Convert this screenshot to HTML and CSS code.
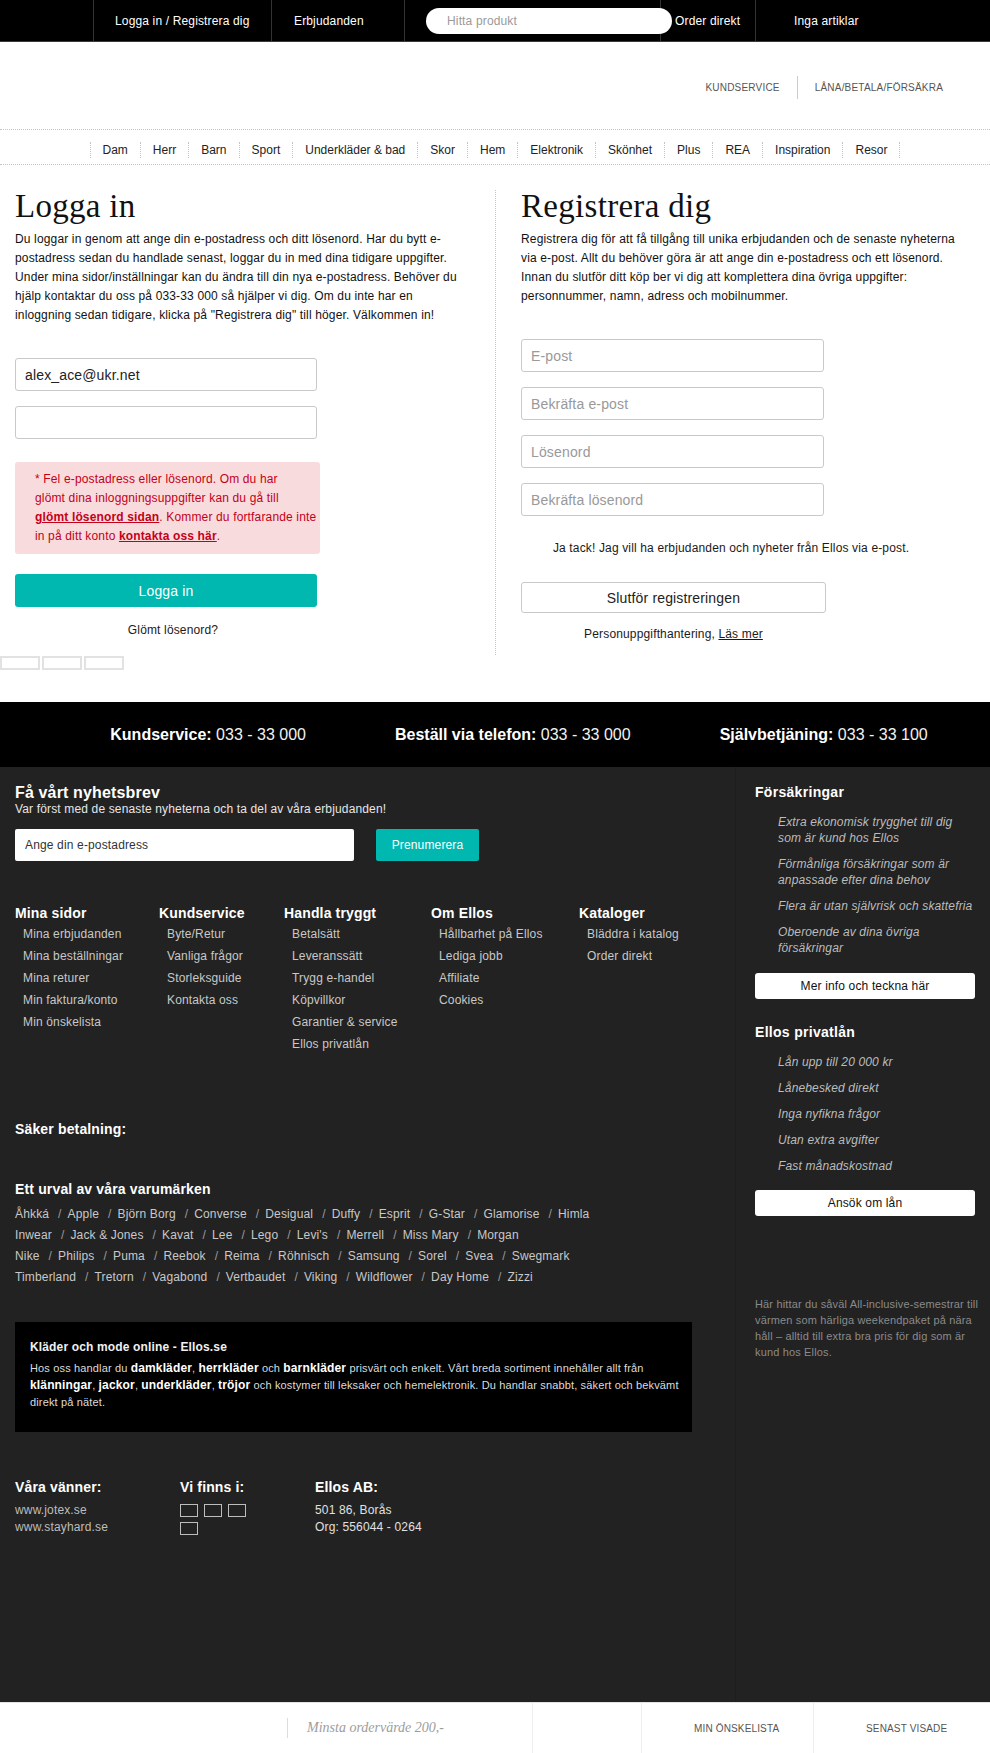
FILE: index.html
```html
<!DOCTYPE html>
<html lang="sv">
<head>
<meta charset="utf-8">
<title>Logga in – Ellos</title>
<link rel="stylesheet" href="styles.css">
</head>
<body>
<div class="topbar">
  <div class="tb-cell tb-first"></div>
  <a class="tb-cell tb-login" href="#">Logga in / Registrera dig</a>
  <a class="tb-cell tb-offers" href="#">Erbjudanden</a>
  <div class="tb-cell tb-search"><input class="search" type="text" placeholder="Hitta produkt"></div>
  <a class="tb-cell tb-order" href="#">Order direkt</a>
  <a class="tb-cell tb-cart" href="#">Inga artiklar</a>
</div>

<header class="header">
  <a class="service-link" href="#">Kundservice</a>
  <a class="service-link" href="#">Låna/Betala/Försäkra</a>
</header>

<nav class="mainnav">
  <ul>
    <li>Dam</li><li>Herr</li><li>Barn</li><li>Sport</li><li>Underkläder &amp; bad</li><li>Skor</li><li>Hem</li><li>Elektronik</li><li>Skönhet</li><li>Plus</li><li>REA</li><li>Inspiration</li><li>Resor</li>
  </ul>
</nav>

<main class="account">
  <section class="col-login">
    <h1 class="page-title">Logga in</h1>
    <p class="intro">Du loggar in genom att ange din e-postadress och ditt lösenord. Har du bytt e-<br>postadress sedan du handlade senast, loggar du in med dina tidigare uppgifter.<br>Under mina sidor/inställningar kan du ändra till din nya e-postadress. Behöver du<br>hjälp kontaktar du oss på 033-33 000 så hjälper vi dig. Om du inte har en<br>inloggning sedan tidigare, klicka på "Registrera dig" till höger. Välkommen in!</p>
    <input class="field" type="text" value="alex_ace@ukr.net">
    <input class="field" type="password">
    <div class="error">* Fel e-postadress eller lösenord. Om du har<br>glömt dina inloggningsuppgifter kan du gå till<br><a href="#">glömt lösenord sidan</a>. Kommer du fortfarande inte<br>in på ditt konto <a href="#">kontakta oss här</a>.</div>
    <button class="btn-primary" type="button">Logga in</button>
    <p class="forgot">Glömt lösenord?</p>
    <div class="social"><span></span><span></span><span></span></div>
  </section>

  <section class="col-register">
    <h1 class="page-title">Registrera dig</h1>
    <p class="intro">Registrera dig för att få tillgång till unika erbjudanden och de senaste nyheterna<br>via e-post. Allt du behöver göra är att ange din e-postadress och ett lösenord.<br>Innan du slutför ditt köp ber vi dig att komplettera dina övriga uppgifter:<br>personnummer, namn, adress och mobilnummer.</p>
    <input class="field field-wide" type="text" placeholder="E-post">
    <input class="field field-wide" type="text" placeholder="Bekräfta e-post">
    <input class="field field-wide" type="text" placeholder="Lösenord">
    <input class="field field-wide" type="text" placeholder="Bekräfta lösenord">
    <p class="optin">Ja tack! Jag vill ha erbjudanden och nyheter från Ellos via e-post.</p>
    <button class="btn-secondary" type="button">Slutför registreringen</button>
    <p class="reg-note">Personuppgifthantering, <a href="#">Läs mer</a></p>
  </section>
</main>

<div class="contactband">
  <span><strong>Kundservice:</strong> 033 - 33 000</span>
  <span><strong>Beställ via telefon:</strong> 033 - 33 000</span>
  <span><strong>Självbetjäning:</strong> 033 - 33 100</span>
</div>

<footer class="footer">
  <div class="footer-main">
    <h2 class="nl-title">Få vårt nyhetsbrev</h2>
    <p class="nl-sub">Var först med de senaste nyheterna och ta del av våra erbjudanden!</p>
    <div class="nl-form">
      <input class="nl-input" type="text" placeholder="Ange din e-postadress">
      <button class="nl-btn" type="button">Prenumerera</button>
    </div>

    <div class="link-cols">
      <div>
        <h4 class="f-head">Mina sidor</h4>
        <ul class="f-list"><li>Mina erbjudanden</li><li>Mina beställningar</li><li>Mina returer</li><li>Min faktura/konto</li><li>Min önskelista</li></ul>
      </div>
      <div>
        <h4 class="f-head">Kundservice</h4>
        <ul class="f-list"><li>Byte/Retur</li><li>Vanliga frågor</li><li>Storleksguide</li><li>Kontakta oss</li></ul>
      </div>
      <div>
        <h4 class="f-head">Handla tryggt</h4>
        <ul class="f-list"><li>Betalsätt</li><li>Leveranssätt</li><li>Trygg e-handel</li><li>Köpvillkor</li><li>Garantier &amp; service</li><li>Ellos privatlån</li></ul>
      </div>
      <div>
        <h4 class="f-head">Om Ellos</h4>
        <ul class="f-list"><li>Hållbarhet på Ellos</li><li>Lediga jobb</li><li>Affiliate</li><li>Cookies</li></ul>
      </div>
      <div>
        <h4 class="f-head">Kataloger</h4>
        <ul class="f-list"><li>Bläddra i katalog</li><li>Order direkt</li></ul>
      </div>
    </div>

    <h4 class="f-head pay-title">Säker betalning:</h4>

    <div class="brands">
      <h4 class="f-head">Ett urval av våra varumärken</h4>
      <div class="brand-lines">
        <div class="brand-line">Åhkká<span class="sep">/</span>Apple<span class="sep">/</span>Björn Borg<span class="sep">/</span>Converse<span class="sep">/</span>Desigual<span class="sep">/</span>Duffy<span class="sep">/</span>Esprit<span class="sep">/</span>G-Star<span class="sep">/</span>Glamorise<span class="sep">/</span>Himla</div>
        <div class="brand-line">Inwear<span class="sep">/</span>Jack &amp; Jones<span class="sep">/</span>Kavat<span class="sep">/</span>Lee<span class="sep">/</span>Lego<span class="sep">/</span>Levi's<span class="sep">/</span>Merrell<span class="sep">/</span>Miss Mary<span class="sep">/</span>Morgan</div>
        <div class="brand-line">Nike<span class="sep">/</span>Philips<span class="sep">/</span>Puma<span class="sep">/</span>Reebok<span class="sep">/</span>Reima<span class="sep">/</span>Röhnisch<span class="sep">/</span>Samsung<span class="sep">/</span>Sorel<span class="sep">/</span>Svea<span class="sep">/</span>Swegmark</div>
        <div class="brand-line">Timberland<span class="sep">/</span>Tretorn<span class="sep">/</span>Vagabond<span class="sep">/</span>Vertbaudet<span class="sep">/</span>Viking<span class="sep">/</span>Wildflower<span class="sep">/</span>Day Home<span class="sep">/</span>Zizzi</div>
      </div>
    </div>

    <div class="seo">
      <h5 class="seo-title">Kläder och mode online - Ellos.se</h5>
      <p class="seo-text">Hos oss handlar du <strong>damkläder</strong>, <strong>herrkläder</strong> och <strong>barnkläder</strong> prisvärt och enkelt. Vårt breda sortiment innehåller allt från<br><strong>klänningar</strong>, <strong>jackor</strong>, <strong>underkläder</strong>, <strong>tröjor</strong> och kostymer till leksaker och hemelektronik. Du handlar snabbt, säkert och bekvämt<br>direkt på nätet.</p>
    </div>

    <div class="friends">
      <div>
        <h4 class="f-head">Våra vänner:</h4>
        <div class="friends-body"><div>www.jotex.se</div><div>www.stayhard.se</div></div>
      </div>
      <div>
        <h4 class="f-head">Vi finns i:</h4>
        <div class="friends-body social-icons"><span></span><span></span><span></span><span></span></div>
      </div>
      <div>
        <h4 class="f-head">Ellos AB:</h4>
        <div class="friends-body address"><div>501 86, Borås</div><div>Org: 556044 - 0264</div></div>
      </div>
    </div>
  </div>

  <aside class="footer-aside">
    <h3 class="aside-title">Försäkringar</h3>
    <ul class="aside-list">
      <li>Extra ekonomisk trygghet till dig<br>som är kund hos Ellos</li>
      <li>Förmånliga försäkringar som är<br>anpassade efter dina behov</li>
      <li>Flera är utan självrisk och skattefria</li>
      <li>Oberoende av dina övriga<br>försäkringar</li>
    </ul>
    <button class="aside-btn" type="button">Mer info och teckna här</button>

    <h3 class="aside-title aside-title-2">Ellos privatlån</h3>
    <ul class="aside-list">
      <li>Lån upp till 20 000 kr</li>
      <li>Lånebesked direkt</li>
      <li>Inga nyfikna frågor</li>
      <li>Utan extra avgifter</li>
      <li>Fast månadskostnad</li>
    </ul>
    <button class="aside-btn aside-btn-2" type="button">Ansök om lån</button>

    <p class="travel">Här hittar du såväl All-inclusive-semestrar till<br>värmen som härliga weekendpaket på nära<br>håll – alltid till extra bra pris för dig som är<br>kund hos Ellos.</p>
  </aside>
</footer>

<div class="bottombar">
  <div class="bb-cell bb-blank"></div>
  <div class="bb-cell bb-min"><span class="bb-min-text">Minsta ordervärde 200,-</span></div>
  <div class="bb-cell bb-gap"></div>
  <a class="bb-cell bb-link" href="#">Min önskelista</a>
  <a class="bb-cell bb-link bb-last" href="#">Senast visade</a>
</div>
</body>
</html>
```

FILE: styles.css
```css
* { box-sizing: border-box; }

body {
  margin: 0;
  font-family: "Liberation Sans", Arial, Helvetica, sans-serif;
  letter-spacing: 0.15px;
  color: #1a1a1a;
  background: #fff;
}

a { color: inherit; text-decoration: none; }
ul { list-style: none; margin: 0; padding: 0; }
button { cursor: pointer; letter-spacing: 0.15px; }
input { letter-spacing: 0.15px; }

/* ---------- top bar ---------- */
.topbar {
  display: flex;
  height: 42px;
  background: #000;
  border-bottom: 1px solid #3a3a3a;
  color: #fff;
  font-size: 12px;
}
.tb-cell {
  display: flex;
  flex: none;
  align-items: center;
  height: 41px;
  border-right: 1px solid #333;
  white-space: nowrap;
}
.tb-first { width: 94px; }
.tb-login { width: 178px; padding-left: 21px; }
.tb-offers { width: 133px; padding-left: 22px; }
.tb-search { width: 256px; padding-left: 21px; }
.tb-order { width: 95px; padding-left: 14px; }
.tb-cart { flex: 1; padding-left: 38px; border-right: 0; }

.search {
  position: relative;
  z-index: 1;
  flex: none;
  width: 246px;
  height: 26px;
  border: 0;
  border-radius: 13px;
  padding: 0 21px;
  background: #fff;
  font: 12px "Liberation Sans", Arial, sans-serif;
  outline: none;
}
.search::placeholder { color: #9a9a9a; }

/* ---------- header ---------- */
.header {
  height: 87px;
  display: flex;
  justify-content: flex-end;
  align-items: center;
  padding: 4px 47px 0 0;
}
.service-link {
  font-size: 10px;
  line-height: 23px;
  color: #555;
  text-transform: uppercase;
  letter-spacing: 0.2px;
  padding: 0 17px;
}
.service-link + .service-link {
  border-left: 1px solid #ccc;
  padding-right: 0;
}

/* ---------- main nav ---------- */
.mainnav {
  border-top: 1px dotted #c4c4c4;
  border-bottom: 1px dotted #c4c4c4;
  padding: 12px 0 6px;
}
.mainnav ul {
  display: flex;
  justify-content: center;
}
.mainnav li {
  border-left: 1px dotted #c4c4c4;
  padding: 0 12px;
  font-size: 12px;
  line-height: 16px;
  letter-spacing: 0;
  color: #222;
  white-space: nowrap;
}
.mainnav li:last-child { border-right: 1px dotted #c4c4c4; }

/* ---------- account ---------- */
.account {
  display: flex;
  align-items: flex-start;
  padding-bottom: 32px;
}
.col-login {
  flex: none;
  width: 495px;
  margin-top: 25px;
  padding: 0 15px;
}
.col-register {
  flex: 1;
  margin-top: 25px;
  border-left: 1px dotted #c4c4c4;
  padding: 0 20px 11px 25px;
}
.page-title {
  margin: 0 0 8px;
  font: normal 33px/32px "Liberation Serif", Georgia, serif;
  letter-spacing: 0.3px;
  color: #111;
}
.intro {
  margin: 0 0 33px;
  font-size: 12px;
  line-height: 19px;
  white-space: nowrap;
  color: #111;
}
.field {
  display: block;
  width: 302px;
  height: 33px;
  margin: 0 0 15px;
  padding: 0 9px;
  border: 1px solid #c9c9c9;
  border-radius: 3px;
  font: 14px "Liberation Sans", Arial, sans-serif;
  color: #222;
  background: #fff;
}
.field-wide { width: 303px; }
.field::placeholder { color: #999; }

.error {
  width: 305px;
  margin-top: 23px;
  padding: 8px 10px 8px 20px;
  background: #f8dcdd;
  border-radius: 3px;
  color: #c4001a;
  font-size: 12px;
  line-height: 19px;
  white-space: nowrap;
}
.error a { font-weight: bold; text-decoration: underline; }

.btn-primary {
  display: block;
  width: 302px;
  height: 33px;
  margin-top: 20px;
  border: 0;
  border-radius: 3px;
  background: #00b8b0;
  color: #fff;
  font: 14px "Liberation Sans", Arial, sans-serif;
}
.forgot {
  width: 316px;
  margin: 14px 0 0;
  text-align: center;
  font-size: 12px;
  line-height: 19px;
}
.social {
  display: flex;
  gap: 2px;
  margin: 16px 0 0 -15px;
}
.social span {
  width: 40px;
  height: 14px;
  border: 2px solid #e2e2e2;
}

.optin {
  width: 420px;
  margin: 23px 0 0;
  text-align: center;
  font-size: 12px;
  line-height: 19px;
}
.btn-secondary {
  display: block;
  width: 305px;
  height: 31px;
  margin-top: 24px;
  border: 1px solid #c9c9c9;
  border-radius: 3px;
  background: #fff;
  color: #222;
  font: 14px "Liberation Sans", Arial, sans-serif;
}
.reg-note {
  width: 305px;
  margin: 12px 0 0;
  text-align: center;
  font-size: 12px;
  line-height: 19px;
}
.reg-note a { text-decoration: underline; }

/* ---------- contact band ---------- */
.contactband {
  display: flex;
  justify-content: center;
  align-items: center;
  gap: 89px;
  height: 65px;
  padding-left: 48px;
  background: #000;
  color: #f2f2f2;
  font-size: 16px;
  letter-spacing: 0;
  white-space: nowrap;
}
.contactband strong { color: #fff; }

/* ---------- footer ---------- */
.footer {
  display: flex;
  min-height: 935px;
  background: #222;
  color: #fff;
}
.footer-main {
  flex: none;
  width: 735px;
  padding: 17px 0 0 15px;
}
.footer-aside {
  flex: 1;
  min-width: 0;
  border-left: 1px solid #1e1e1e;
  padding: 15px 15px 0 19px;
}

.nl-title {
  margin: 0;
  font-size: 16px;
  line-height: 18px;
  font-weight: bold;
}
.nl-sub {
  margin: 0;
  font-size: 12px;
  line-height: 14px;
  color: #e6e6e6;
}
.nl-form {
  display: flex;
  margin-top: 13px;
}
.nl-input {
  width: 339px;
  height: 32px;
  border: 0;
  border-radius: 2px;
  padding: 0 10px;
  font: 12px "Liberation Sans", Arial, sans-serif;
}
.nl-input::placeholder { color: #333; }
.nl-btn {
  width: 103px;
  height: 32px;
  margin-left: 22px;
  border: 0;
  border-radius: 2px;
  background: #00b8b0;
  color: #fff;
  font: 12px "Liberation Sans", Arial, sans-serif;
}

.f-head {
  margin: 0;
  font-size: 14px;
  line-height: 20px;
  font-weight: bold;
  color: #fff;
}
.link-cols {
  display: grid;
  grid-template-columns: 144px 125px 147px 148px auto;
  margin-top: 42px;
}
.f-list { padding-left: 8px; }
.f-list li {
  font-size: 12px;
  line-height: 22px;
  color: #c8c8c8;
  white-space: nowrap;
}

.pay-title { margin-top: 64px; }

.brands { margin-top: 40px; }
.brand-lines { margin-top: 5px; }
.brand-line {
  font-size: 12px;
  line-height: 21px;
  color: #c8c8c8;
  white-space: nowrap;
}
.sep {
  margin: 0 6px 0 9px;
  color: #9a9a9a;
}

.seo {
  width: 677px;
  margin-top: 34px;
  padding: 17px 15px 21px;
  background: #000;
}
.seo-title {
  margin: 0;
  font-size: 12px;
  line-height: 17px;
  font-weight: bold;
  color: #f0f0f0;
}
.seo-text {
  margin: 4px 0 0;
  font-size: 11px;
  line-height: 17px;
  color: #dcdcdc;
  white-space: nowrap;
}
.seo-text strong { font-size: 12px; color: #fff; }

.friends {
  display: grid;
  grid-template-columns: 165px 135px auto;
  margin-top: 45px;
}
.friends-body {
  margin-top: 5px;
  font-size: 12px;
  line-height: 17px;
  color: #bdbdbd;
}
.address { color: #e0e0e0; }
.social-icons {
  display: flex;
  flex-wrap: wrap;
  gap: 5px 6px;
  width: 72px;
  padding-top: 2px;
}
.social-icons span {
  width: 18px;
  height: 13px;
  border: 1px solid #bdbdbd;
}

/* aside */
.aside-title {
  margin: 0;
  font-size: 14px;
  line-height: 20px;
  font-weight: bold;
  letter-spacing: 0.3px;
}
.aside-title-2 { margin-top: 23px; }
.aside-list {
  display: flex;
  flex-direction: column;
  gap: 10px;
  margin-top: 12px;
  padding-left: 23px;
}
.aside-list li {
  font-size: 12px;
  line-height: 16px;
  font-style: italic;
  color: #bcbcbc;
  white-space: nowrap;
}
.aside-btn {
  display: block;
  width: 100%;
  height: 26px;
  margin-top: 17px;
  border: 0;
  border-radius: 3px;
  background: #fff;
  color: #111;
  font: 12px "Liberation Sans", Arial, sans-serif;
}
.aside-btn-2 { margin-top: 16px; }
.travel {
  margin: 80px 0 0;
  font-size: 11px;
  line-height: 16px;
  color: #8a8a8a;
  white-space: nowrap;
}

/* ---------- bottom bar ---------- */
.bottombar {
  display: flex;
  height: 51px;
  border-top: 1px solid #e3e3e3;
  background: #fff;
}
.bb-cell {
  display: flex;
  flex: none;
  align-items: center;
  height: 50px;
}
.bb-blank { width: 287px; }
.bb-min { width: 245px; }
.bb-min-text {
  border-left: 1px solid #ddd;
  padding-left: 19px;
  font: italic 14px/20px "Liberation Serif", Georgia, serif;
  letter-spacing: 0;
  color: #9d9d9d;
}
.bb-gap { width: 109px; border-left: 1px solid #eee; }
.bb-link {
  width: 172px;
  border-left: 1px solid #eee;
  padding-left: 52px;
  font-size: 10px;
  color: #555;
  text-transform: uppercase;
  white-space: nowrap;
}
.bb-last { flex: 1; }
```
